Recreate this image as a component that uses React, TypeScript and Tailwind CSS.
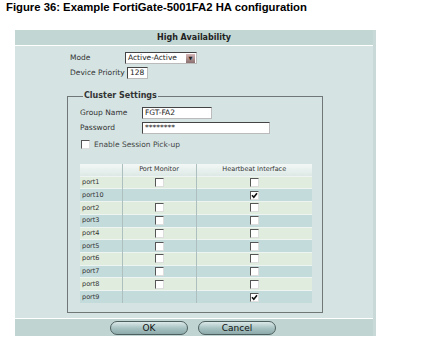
const PORTS: { name: string; monitor: boolean | null; heartbeat: boolean }[] = [
  { name: "port1", monitor: false, heartbeat: false },
  { name: "port10", monitor: null, heartbeat: true },
  { name: "port2", monitor: false, heartbeat: false },
  { name: "port3", monitor: false, heartbeat: false },
  { name: "port4", monitor: false, heartbeat: false },
  { name: "port5", monitor: false, heartbeat: false },
  { name: "port6", monitor: false, heartbeat: false },
  { name: "port7", monitor: false, heartbeat: false },
  { name: "port8", monitor: false, heartbeat: false },
  { name: "port9", monitor: null, heartbeat: true },
];

function Box({ checked }: { checked: boolean }) {
  return (
    <span className="inline-flex h-[9px] w-[9px] items-center justify-center border border-t-[#555] border-l-[#555] border-r-[#ddd] border-b-[#ddd] bg-white align-middle">
      {checked && (
        <svg width="7" height="7" viewBox="0 0 7 7">
          <path d="M1 3.2 L2.8 5.2 L6 1.2" fill="none" stroke="#111" strokeWidth={1.6} />
        </svg>
      )}
    </span>
  );
}

function Field({ value, w }: { value: string; w: string }) {
  return (
    <div
      className={`h-[12px] ${w} border border-t-[#444] border-l-[#444] border-r-[#bbb] border-b-[#bbb] bg-white pl-[2px] text-[7.5px] leading-[10px] text-[#222]`}
    >
      {value}
    </div>
  );
}

function Pill({ label }: { label: string }) {
  return (
    <button className="h-[14px] w-[78px] rounded-full border border-[#4d5f5f] bg-gradient-to-b from-[#dce9e9] via-[#a9c3c3] to-[#8eaaaa] text-[9px] leading-[12px] text-[#111]">
      {label}
    </button>
  );
}

export default function App() {
  return (
    <div
      className="h-[345px] w-[428px] overflow-hidden bg-white"
      style={{ fontFamily: "'DejaVu Sans', Verdana, sans-serif" }}
    >
      <h1
        className="pl-[6px] pt-[1px] text-[11.3px] font-bold leading-[13px] text-black"
        style={{ fontFamily: "'Liberation Sans', Arial, sans-serif" }}
      >
        Figure 36: Example FortiGate-5001FA2 HA configuration
      </h1>

      <div className="ml-[15px] mt-[16px] w-[361px] border-r-[3px] border-[#c9d9d8] bg-[#d5e4e3] text-[#333]">
        {/* header */}
        <div className="h-[16px] border-b border-white bg-[#c2d6d4] text-center text-[8px] font-bold leading-[15px] text-[#222]">
          High Availability
        </div>

        {/* body */}
        <div className="h-[272px] pl-[52px] pt-[6px]">
          <div className="flex flex-col gap-[3px] pl-[3px] text-[7.5px] whitespace-nowrap">
            <div className="flex items-center">
              <span className="w-[55px]">Mode</span>
              <div className="flex h-[12px] w-[72px] items-center justify-between border border-t-[#444] border-l-[#444] border-r-[#bbb] border-b-[#bbb] bg-white pl-[2px] leading-[10px] text-[#222]">
                Active-Active
                <span className="mr-[1px] flex h-[9px] w-[9px] items-center justify-center bg-gradient-to-b from-[#d8b8b8] to-[#8a7070] text-[5px] leading-none text-[#222]">
                  ▼
                </span>
              </div>
            </div>
            <div className="flex items-center">
              <span className="w-[57px]">Device Priority</span>
              <Field value="128" w="w-[21px]" />
            </div>
          </div>

          <fieldset className="mt-[12px] w-[256px] border border-[#6f7777] pb-[9px] pl-[12px]">
            <legend className="ml-[3px] px-[1px] text-[8px] font-bold leading-[10px] text-[#333]">
              Cluster Settings
            </legend>
            <div className="flex flex-col gap-[3px] pt-[6px] text-[7.5px] whitespace-nowrap">
              <div className="flex items-center">
                <span className="w-[62px]">Group Name</span>
                <Field value="FGT-FA2" w="w-[70px]" />
              </div>
              <div className="flex items-center">
                <span className="w-[62px]">Password</span>
                <Field value="********" w="w-[128px]" />
              </div>
              <div className="mt-[2px] flex items-center gap-[4px] pl-[1px]">
                <Box checked={false} />
                <span className="text-[#444]">Enable Session Pick-up</span>
              </div>
            </div>

            <table className="mt-[14px] w-[232px] border-collapse text-[6.5px] text-[#333]">
              <thead>
                <tr className="h-[12px] bg-gradient-to-b from-[#f3f8f6] to-[#dde9e6]">
                  <th className="w-[42px] border-r border-[#aebfbf] p-0 font-normal"></th>
                  <th className="w-[74px] border-r border-[#aebfbf] p-0 text-center font-normal">Port Monitor</th>
                  <th className="p-0 text-center font-normal">Heartbeat Interface</th>
                </tr>
              </thead>
              <tbody>
                {PORTS.map((p, i) => (
                  <tr
                    key={p.name}
                    className={`h-[12.7px] border-t border-[#eef4f2] leading-none ${i % 2 === 0 ? "bg-[#e0ecdd]" : "bg-[#c4dbdc]"}`}
                  >
                    <td className="border-r border-[#aebfbf] p-0 pl-[2px]">{p.name}</td>
                    <td className="border-r border-[#aebfbf] p-0 text-center">
                      {p.monitor !== null && <Box checked={p.monitor} />}
                    </td>
                    <td className="p-0 text-center">
                      <Box checked={p.heartbeat} />
                    </td>
                  </tr>
                ))}
              </tbody>
            </table>
          </fieldset>
        </div>

        {/* footer */}
        <div className="flex h-[18px] items-center justify-center gap-[10px] border-t border-white bg-[#c0d4d2] pr-[2px]">
          <Pill label="OK" />
          <Pill label="Cancel" />
        </div>
      </div>
    </div>
  );
}
